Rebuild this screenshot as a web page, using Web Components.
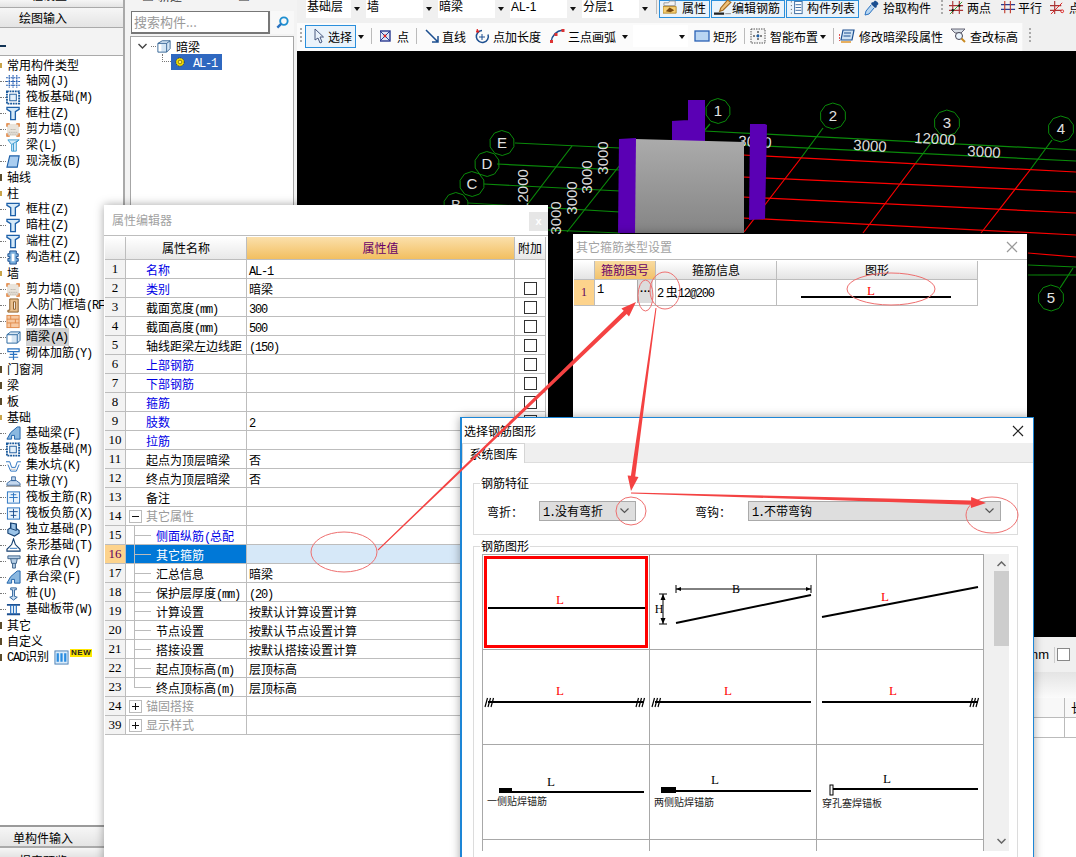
<!DOCTYPE html>
<html lang="zh-CN">
<head>
<meta charset="UTF-8">
<title>钢筋算量</title>
<style>
  html, body { margin: 0; height: 100%; overflow: hidden; background: #f0f0f0; }
  body { font: 12px "Noto Sans CJK SC", sans-serif; color: #000; }
</style>
</head>
<body>
<app-shell>
  <module-nav slot="nav"></module-nav>
  <part-list slot="list"></part-list>
  <draw-area slot="draw"></draw-area>
</app-shell>

<float-window title="属性编辑器" style="left:104px;top:205px;width:444px;height:660px;z-index:2" closebox="flat" dim>
  <prop-table></prop-table>
</float-window>
<float-window title="其它箍筋类型设置" style="left:573px;top:234px;width:454px;height:200px;z-index:3" closebox="x" dim>
  <stirrup-table></stirrup-table>
</float-window>
<float-window title="选择钢筋图形" style="left:460px;top:417px;width:574px;height:450px;z-index:4" closebox="x" blue>
  <shape-picker></shape-picker>
</float-window>
<note-layer></note-layer>

<script>
// wrap ascii runs so they get the half width look of the original font
const lat = s => s.replace(/[\x21-\x7e]+/g, m => `<span class="l">${m}</span>`);
const LAT_CSS = `.l{font-family:"Liberation Mono",monospace;font-size:12px;letter-spacing:-1.2px}`;
const ico = (body, s = 16) => `<svg width="${s}" height="${s}" viewBox="0 0 16 16" fill="none" style="flex:none;display:block">${body}</svg>`;

const ICONS = {
  grid: `<path d="M0 4h15M0 8h15M0 12h15M3.5 1v14M7.5 1v14M11.5 1v14" stroke="#2a62b4" stroke-width="1.2" stroke-dasharray="2 .6"/>`,
  raft: `<rect x="1" y="1.5" width="13" height="13" stroke="#1b5a9c" stroke-width="2" stroke-dasharray="2 .8"/><rect x="4" y="4.5" width="7" height="7" fill="#e4f0fa" stroke="#1b5a9c"/>`,
  column: `<path d="M1 1.5h13v2l-4 2.5v8.5H5V6L1 3.500z" fill="#d5e9f8" stroke="#1c5fa8" stroke-width="1.4"/>`,
  wall: `<rect x="1" y="2" width="13" height="13" fill="#e9e4dc"/><path d="M3 11h9M2 13h11M5 8h6" stroke="#a9a39a" stroke-dasharray="1 1"/><path d="M1 5V2h3M11 2h3v3M1 12v3h3M11 15h3v-3" stroke="#e07a30" stroke-width="1.4"/>`,
  beam: `<path d="M2 2h12l-3 3v9H6V7z" fill="#d5ecfa" stroke="#3a9ad0"/><path d="M6 7l8-5M8 14V6" stroke="#3a9ad0"/>`,
  slab: `<path d="M4 2h10l-2 12H1z" fill="#a9cdf0" stroke="#1c5fa8" stroke-width="1.2"/>`,
  struct: `<path d="M4 1h7v3h2v3h-2v2h2v3h-2v3H4v-3H2V9h2V7H2V4h2z" fill="#7ab0de" stroke="#1c4f90"/><path d="M6 4h3v8H6z" fill="#fff"/>`,
  door: `<path d="M4 1h9v14H2v-2h2zM8 4v8h2V4z" fill="#e9c08f" stroke="#8a5a22"/>`,
  brick: `<rect x="1" y="1.500" width="13" height="13" fill="#f7c9a2" stroke="#e08a4a"/><path d="M1 5.500h13M1 9.500h13M5 1.500v4M10 5.500v4M5 9.500v5" stroke="#e08a4a"/>`,
  hidden: `<path d="M1 5l4-3h10v9l-3 3H1z" fill="#d7e6f3" stroke="#2f6aa0"/><path d="M1 5h11v9M12 5l3-3" stroke="#2f6aa0"/><rect x="2" y="6" width="4" height="7" fill="#fff"/>`,
  hbar: `<path d="M2 3h12v3H2zM8 6v9M4 9h8M3 12h10" stroke="#2a72c0" stroke-width="1.300"/>`,
  fbeam: `<path d="M1 14l4-7 7-6h3v13H9v-4H6v4z" fill="#8bb8e0" stroke="#1c5fa8"/>`,
  pit: `<path d="M0 4h4l2 6h4l2-6h4M2 7l3 7h6l3-7" stroke="#2a72c0"/><path d="M5 12h6" stroke="#888" stroke-dasharray="1 1"/>`,
  pier: `<path d="M6 3h4v4H6zM1 10l4-3h6l4 3v2H1z" fill="#c5d8ee" stroke="#3a6aa0"/><path d="M0 13h16" stroke="#777"/>`,
  rplus: `<rect x="1.500" y="2" width="13" height="12" fill="#eaf4fc" stroke="#2a72c0"/><path d="M8 3v10M3.500 8h9M5 5h6" stroke="#2a72c0"/>`,
  rminus: `<rect x="1.500" y="2" width="13" height="12" fill="#eaf4fc" stroke="#2a72c0"/><path d="M8 3v10M3.500 6h9M5 10h6" stroke="#1c4f90"/>`,
  indep: `<path d="M5 1l6 1v5l3 2v3l-5 3-7-3V8l3-2z" fill="#9cc4e8" stroke="#143f70" stroke-width="1.200"/><path d="M5 1v6l6 2V2" stroke="#143f70"/>`,
  strip: `<path d="M1 14v-2l5-5 2-6 2 6 5 5v2z" fill="#fff" stroke="#143f70" stroke-width="1.200"/><path d="M4 11h8" stroke="#2a72c0"/>`,
  cap: `<path d="M2 2h13v3H2zM5 5l1 5h5l1-5M7 10v5h3v-5" fill="#b7cfe6" stroke="#3a5f88"/>`,
  pile: `<path d="M5 2h6v2H9v7l3 1-4 3-4-3 3-1V4H5z" fill="#c9def2" stroke="#2a5f98"/>`,
  band: `<path d="M1 3h14M1 13h14" stroke="#1c4f90" stroke-width="2"/><path d="M5 3v10M8 3v10M11 3v10" stroke="#2a72c0" stroke-width="1.300"/>`,
  cad: `<rect x="1" y="1" width="14" height="14" fill="#d9ebfa" stroke="#4a7fb5"/><path d="M4 3.500v9M8 3.500v9M12 3.500v9" stroke="#2a8ce0" stroke-width="2.400"/>`,
  sun: `<circle cx="8" cy="8" r="5.500" fill="#f8e300" stroke="#222" stroke-dasharray="1.500 1"/><circle cx="8" cy="8" r="2.500" fill="#fff06a" stroke="#6a5a00"/>`,
  box3d: `<path d="M1 5l5-3h9v9l-4 4H1z" fill="#d3e5f4" stroke="#2f5f90"/><path d="M1 5h10v10M11 5l4-3" stroke="#2f5f90"/><rect x="2" y="6" width="3" height="8" fill="#fff"/>`,
  // toolbar
  prop: `<path d="M1 3h5l1-2h6v5H1z" fill="#f3f3f3" stroke="#999"/><path d="M0 7h14v7H0z" fill="#f6cf73" stroke="#b68a2a"/><path d="M3 12l4-4 5 3-4 2z" fill="#7a4a10"/>`,
  rebar: `<path d="M12 1l3 2-7 7-3 1 1-3z" fill="#f0c27a" stroke="#a36a20"/><path d="M0 13h9" stroke="#222" stroke-width="2"/><path d="M10 13h5" stroke="#999"/>`,
  list: `<path d="M2 2h1M2 6h1M2 10h1M2 14h1M13 3v10" stroke="#444"/><rect x="6" y="1.500" width="8" height="13" fill="#fff" stroke="#3a6aa0"/><path d="M7 5h6M7 8h6M7 11h6" stroke="#3a6aa0"/>`,
  drop: `<path d="M14 1l1 2-2 2 .5 1-2 1-4-4 1-2 1 .5 2-2z" transform="translate(-.5 1)" fill="#1c4f90"/><path d="M7 5L2 11l-1 4 4-1 5-6" fill="#b7d6f2" stroke="#2a72c0"/>`,
  twop: `<path d="M0 6h15M0 11h15M4 1v14M11 1v14" stroke="#a33" stroke-width="1.200"/><path d="M1 15L14 2" stroke="#2a9a2a"/><circle cx="4" cy="11" r="1.300" fill="#111"/><circle cx="11" cy="6" r="1.300" fill="#111"/>`,
  par: `<path d="M0 5h15M0 10h15" stroke="#2a3a90" stroke-width="1.400"/><path d="M4 1v13M10 1v13" stroke="#c0392b" stroke-width="1.200"/>`,
  pt: `<path d="M0 6h12M0 11h12M5 1v14" stroke="#a33" stroke-width="1.200"/><path d="M1 15L13 3" stroke="#d22"/><circle cx="13" cy="12" r="1.500" stroke="#d22"/>`,
  select: `<path d="M3 1v11l3-2 2 5 2-1-2-5h3.500z" fill="#e8f2fb" stroke="#4a5a80"/>`,
  point: `<rect x="0" y="3" width="10" height="10" fill="#dfe6f5" stroke="#2a3a90" stroke-width="1.400"/><path d="M0 3l10 10M10 3L0 13" stroke="#2a3a90"/><circle cx="5" cy="8" r="1.400" fill="#d22"/>`,
  line: `<path d="M2 2l12 12M14 8v6H8" stroke="#1c4f90" stroke-width="1.500"/>`,
  lenpt: `<path d="M8 2.500a6 6 0 1 0 6 4" stroke="#1c4f90" stroke-width="1.500"/><path d="M3 1l2 3h-3" stroke="#d22" fill="#d22"/><path d="M8 6v6M5 9h6" stroke="#1c4f90"/>`,
  arc: `<path d="M2 14C3 8 7 3 14 2" stroke="#1c4f90" stroke-width="1.400"/><rect x="1" y="12" width="3" height="3" fill="#d33"/><rect x="5.500" y="5" width="3" height="3" fill="#d33"/><rect x="12.500" y="1" width="3" height="3" fill="#d33"/>`,
  rect: `<rect x="1" y="3" width="14" height="10" fill="#b9d5f2" stroke="#2a62b4" stroke-width="1.300"/>`,
  smart: `<rect x="1" y="1" width="14" height="14" fill="#f5f5f5" stroke="#555" stroke-dasharray="1.500 1"/><path d="M8 3v10M3 8h10" stroke="#111" stroke-dasharray="2 1.500"/><circle cx="8" cy="8" r="1.400" fill="#1c5fa8"/>`,
  edit: `<path d="M4 2h11l-2 10H2z" fill="#cfe3f4" stroke="#1c4f90" stroke-width="1.200"/><path d="M5 5h7M4.500 8h7" stroke="#1c4f90"/><path d="M0 6v7" stroke="#d22" stroke-width="1.500" stroke-dasharray="2 1"/><path d="M2 13h10v2H2z" fill="#e8b060"/>`,
  zoomh: `<path d="M1 1h14l-4 4H5z" fill="#d7dde4" stroke="#667"/><circle cx="9" cy="8" r="3.500" fill="#eaf4fc" stroke="#445"/><path d="M11.500 10.500L15 14" stroke="#c98a20" stroke-width="2"/>`,
  search: `<circle cx="9.500" cy="6.500" r="4" stroke="#1f8fd0" stroke-width="2"/><path d="M6.500 9.500L2.500 13.500" stroke="#2a72c0" stroke-width="2.500"/>`
};

class Comp extends HTMLElement {
  constructor() { super(); this.attachShadow({ mode: 'open' }); }
  paint(css, html) { this.shadowRoot.innerHTML = `<style>${LAT_CSS}${css}</style>${html}`; }
}

class AppShell extends Comp {
  connectedCallback() {
    this.paint(`:host{display:grid;grid-template-columns:125px 172px 779px;width:1076px;height:857px;overflow:hidden}
      ::slotted(*){min-width:0}`,
      `<slot name="nav"></slot><slot name="list"></slot><slot name="draw"></slot>`);
  }
}

class ModuleNav extends Comp {
  connectedCallback() {
    const sec = (t, open) => `<tree-node group="${open ? 'open' : 'shut'}" label="${t}"></tree-node>`;
    const it = (ic, t, x = '') => `<tree-node icon="${ic}" label="${t}" ${x}></tree-node>`;
    this.paint(`:host{display:flex;flex-direction:column;height:857px;border-right:2px solid #a9a9a9;box-sizing:border-box;background:#f0f0f0;overflow:hidden}
      .tab{flex:none;box-sizing:border-box;padding-left:19px;background:linear-gradient(#f6f6f6,#e4e4e4);border-bottom:1px solid #aaa;overflow:hidden}
      .t0{height:8px}
      .t0 span{display:block;margin-top:-14px;line-height:18px}
      .t1{height:20px;line-height:19px}
      .head{flex:none;height:27px;background:#f3f3f3;display:flex;align-items:center}
      .head i{width:6px;height:2px;background:#135;margin-top:8px}
      .tree{flex:1;background:#fff;border-top:1px solid #aaa;padding-top:1px;overflow:hidden}
      .t2{height:22px;line-height:21px;padding-left:13px;border-top:2px solid #9a9a9a}
      .t3{height:10px;line-height:26px;padding-left:19px;border-top:1px solid #aaa;border-bottom:0}`,
      `<div class="tab t0"><span>工程设置</span></div><div class="tab t1">绘图输入</div>
       <div class="head"><i></i></div>
       <div class="tree">
        ${sec('常用构件类型', 1)}${it('grid', '轴网(J)')}${it('raft', '筏板基础(M)')}${it('column', '框柱(Z)')}${it('wall', '剪力墙(Q)')}${it('beam', '梁(L)')}${it('slab', '现浇板(B)')}
        ${sec('轴线')}${sec('柱', 1)}${it('column', '框柱(Z)')}${it('column', '暗柱(Z)')}${it('column', '端柱(Z)')}${it('struct', '构造柱(Z)')}
        ${sec('墙', 1)}${it('wall', '剪力墙(Q)')}${it('door', '人防门框墙(RF)')}${it('brick', '砌体墙(Q)')}${it('hidden', '暗梁(A)', 'sel')}${it('hbar', '砌体加筋(Y)')}
        ${sec('门窗洞')}${sec('梁')}${sec('板')}${sec('基础', 1)}
        ${it('fbeam', '基础梁(F)')}${it('raft', '筏板基础(M)')}${it('pit', '集水坑(K)')}${it('pier', '柱墩(Y)')}${it('rplus', '筏板主筋(R)')}${it('rminus', '筏板负筋(X)')}${it('indep', '独立基础(P)')}${it('strip', '条形基础(T)')}${it('cap', '桩承台(V)')}${it('fbeam', '承台梁(F)')}${it('pile', '桩(U)')}${it('band', '基础板带(W)')}
        ${sec('其它')}${sec('自定义')}<tree-node group="shut" label="CAD识别" badge></tree-node>
       </div>
       <div class="tab t2">单构件输入</div><div class="tab t3">报表预览</div>`);
  }
}

class TreeNode extends Comp {
  connectedCallback() {
    const label = lat(this.getAttribute('label'));
    const group = this.getAttribute('group');
    const badge = this.hasAttribute('badge')
      ? `<span class="cad">${ico(ICONS.cad, 15)}</span><span class="new">NEW</span>` : '';
    const lead = group
      ? `<i class="${group}"></i>`
      : `<b></b><span class="ic">${ico(ICONS[this.getAttribute('icon')], 15)}</span>`;
    this.paint(`:host{display:flex;align-items:center;height:16px;white-space:nowrap;line-height:16px}
      b{width:6px;border-top:1px dotted #777;flex:none}
      .ic{width:15px;flex:none;margin-right:5px}
      i{width:2px;height:7px;flex:none;margin-right:5px;background:#5a4a2a}
      i.open{background:#c9a44a;height:5px}
      .sel{background:#d3d3d3;padding-right:1px}
      .cad{margin-left:5px;margin-right:1px}
      .new{font:bold 8px/8px "Liberation Sans",sans-serif;background:#ffe600;color:#222;padding:0 1px;margin-top:-8px;letter-spacing:.5px}`,
      `${lead}<span class="${this.hasAttribute('sel') ? 'sel' : ''}">${label}</span>${badge}`);
  }
}

class PartList extends Comp {
  connectedCallback() {
    this.paint(`:host{display:flex;flex-direction:column;height:857px;background:#f3f3f3;padding:0 3px 0 5px;box-sizing:border-box;overflow:hidden}
      .top{flex:none;height:11px;overflow:hidden;display:flex;gap:4px;line-height:16px;padding-left:12px;align-items:flex-start;color:#333}
      .top span{margin-top:-12px}
      .find{flex:none;display:flex;height:23px;padding-left:1px;gap:1px}
      .find div{width:136px;border:1px solid #777;border-width:1px 2px 2px 1px;background:#fff;color:#999;font-size:13px;line-height:20px;padding-left:2px;box-sizing:content-box;height:20px}
      .find span{width:23px;display:flex;align-items:center;justify-content:center;background:#f8f8f8}
      .box{flex:1;margin-top:2px;background:#fff;border:1px solid #a6a6a6;padding:1px 0 0 0;position:relative}
      .r{display:flex;align-items:center;height:16px}
      .exp{width:9px;height:8px;margin:0 4px 0 7px;flex:none}
      .dots{width:5px;border-top:1px dotted #777;margin-right:1px;flex:none}
      .v{border-left:1px dotted #777;height:8px;width:9px;margin:-8px 0 0 31px;box-sizing:border-box;border-bottom:1px dotted #777;flex:none}
      .hit{display:flex;align-items:center;background:#2f68c0;color:#fff;width:51px;height:16px;padding-left:3px;gap:7px;box-sizing:border-box}
      .t{margin-left:5px}`,
      `<div class="top"><span>▣</span><span>新建</span><span style="margin-left:16px">×</span><span style="margin-left:20px">▣</span></div>
       <div class="find"><div>搜索构件...</div><span>${ico(ICONS.search, 15)}</span></div>
       <div class="box">
         <div class="r"><svg class="exp" viewBox="0 0 9 8" fill="none"><path d="M.5 2l4 4 4-4" stroke="#444" stroke-width="1.400"/></svg><span class="dots"></span>${ico(ICONS.box3d, 14)}<span class="t">暗梁</span></div>
         <div class="r"><span class="v"></span><span class="hit">${ico(ICONS.sun, 12)}<span>${lat('AL-1')}</span></span></div>
       </div>`);
  }
}

class TbBtn extends Comp {
  connectedCallback() {
    const ic = this.getAttribute('icon');
    const label = this.getAttribute('label') || '';
    this.paint(`:host{display:flex;align-items:center;box-sizing:border-box;height:100%;white-space:nowrap;flex:none}
      :host([pressed]){border:1px solid #2a8fdc;background:#eaf3fb}
      svg{margin-right:var(--g,4px)}`,
      `${ic ? ico(ICONS[ic], +(this.getAttribute('size') || 16)) : ''}<span>${label}</span>`);
  }
}

class TbSelect extends Comp {
  connectedCallback() {
    this.paint(`:host{display:flex;flex:none;height:18px;background:#fff;white-space:nowrap;box-sizing:border-box;padding-left:1px;font-family:"Liberation Sans","Noto Sans CJK SC",sans-serif}
      span{flex:1;line-height:14px}
      u{width:12px;background:#f0f0f0;position:relative;display:block;flex:none}
      u::after{content:"";position:absolute;left:3px;top:7px;border:3px solid transparent;border-top:4px solid #111}`,
      `<span>${this.getAttribute('label') || ''}</span><u></u>`);
  }
}

class DrawArea extends Comp {
  connectedCallback() {
    const caret = x => `<i class="caret" style="margin-left:${x}px"></i>`;
    const sep = x => `<i class="sep" style="margin-left:${x}px"></i>`;
    const grip = x => `<i class="grip" style="margin-left:${x}px"></i>`;
    this.paint(`:host{display:flex;flex-direction:column;height:857px;background:#f0f0f0;overflow:hidden}
      .tb1{flex:none;height:23px;display:flex;align-items:flex-start;padding-left:9px}
      .tb1 tb-btn{height:18px;padding-bottom:3px}
      .tb2{flex:none;height:28px;display:flex;align-items:center;background:linear-gradient(90deg,#fbfbfb 93%,#f0f0f0 93.2%);padding-bottom:2px;box-sizing:border-box}
      .tb2 tb-btn{height:23px}
      .caret{width:0;height:0;border:3px solid transparent;border-top:4px solid #111;margin-top:4px;flex:none}
      .sep{width:1px;height:16px;background:#bbb;flex:none}
      .grip{width:2px;height:16px;flex:none;background:repeating-linear-gradient(#aaa 0 2px,transparent 2px 4px)}
      .fld{flex:none;width:55px;height:22px;background:#fff;display:flex;align-items:center;justify-content:flex-end;padding-right:3px;box-sizing:border-box}
      .fld .caret{margin-top:4px}
      cad-view{flex:none;height:586px}
      bottom-panel{flex:1}`,
      `<div class="tb1">
         <tb-select label="基础层" style="width:57px"></tb-select>
         <tb-select label="墙" style="width:69px;margin-left:3px"></tb-select>
         <tb-select label="暗梁" style="width:69px;margin-left:3px"></tb-select>
         <tb-select label="AL-1" style="width:69px;margin-left:3px"></tb-select>
         <tb-select label="分层1" style="width:69px;margin-left:3px"></tb-select>
         <i class="sep" style="margin-left:5px;height:14px"></i>
         <tb-btn pressed icon="prop" label="属性" style="margin-left:2px;width:51px;padding-left:3px;--g:4px" size="15"></tb-btn>
         <tb-btn pressed icon="rebar" label="编辑钢筋" style="margin-left:1px;width:74px;padding-left:2px;--g:0px" size="18"></tb-btn>
         <tb-btn pressed icon="list" label="构件列表" style="margin-left:1px;width:73px;padding-left:2px;--g:3px" size="15"></tb-btn>
         <tb-btn icon="drop" label="拾取构件" style="margin-left:5px;width:71px;--g:3px"></tb-btn>
         <i class="grip" style="margin-left:6px;height:14px"></i>
         <tb-btn icon="twop" label="两点" style="margin-left:6px;width:45px;--g:3px" size="15"></tb-btn>
         <tb-btn icon="par" label="平行" style="margin-left:7px;width:45px;--g:2px" size="15"></tb-btn>
         <tb-btn icon="pt" label="点角" style="margin-left:4px;width:45px;--g:4px" size="15"></tb-btn>
       </div>
       <div class="tb2">
         ${grip(3)}
         <tb-btn pressed icon="select" label="选择" style="margin-left:3px;width:51px;padding-left:6px;--g:0px"></tb-btn>
         ${caret(2)}${sep(7)}
         <tb-btn icon="point" label="点" style="margin-left:8px;width:36px;--g:1px"></tb-btn>
         ${sep(0)}
         <tb-btn icon="line" label="直线" style="margin-left:7px;width:48px;--g:2px"></tb-btn>
         <tb-btn icon="lenpt" label="点加长度" style="margin-left:2px;width:73px;--g:3px"></tb-btn>
         <tb-btn icon="arc" label="三点画弧" style="margin-left:2px;width:73px;--g:3px"></tb-btn>
         ${caret(0)}
         <div class="fld" style="margin-left:5px"><i class="caret"></i></div>
         <tb-btn icon="rect" label="矩形" style="margin-left:6px;width:50px;--g:3px"></tb-btn>
         ${sep(0)}
         <tb-btn icon="smart" label="智能布置" style="margin-left:5px;width:70px;--g:4px"></tb-btn>
         ${caret(0)}${sep(7)}
         <tb-btn icon="edit" label="修改暗梁段属性" style="margin-left:5px;width:111px;--g:4px"></tb-btn>
         <tb-btn icon="zoomh" label="查改标高" style="width:70px;--g:4px"></tb-btn>
         ${grip(9)}
       </div>
       <cad-view></cad-view>
       <bottom-panel></bottom-panel>`);
  }
}

class CadView extends Comp {
  connectedCallback() {
    const G = '#0a8a0a', R = '#f00';
    const ln = (c, ...seg) => seg.map(s => `<line x1="${s[0]}" y1="${s[1]}" x2="${s[2]}" y2="${s[3]}" stroke="${c}" stroke-width="1.200"/>`).join('');
    const axis = (t, x, y, r = 12.500) => {
      let p = [];
      for (let i = 0; i < 10; i++) { const a = i * Math.PI / 5 + .3; p.push(`${(x + r * Math.cos(a)).toFixed(1)},${(y + r * Math.sin(a)).toFixed(1)}`); }
      return `<polygon points="${p.join(' ')}" fill="none" stroke="${G}"/><text x="${x}" y="${y + 5}" class="a">${t}</text>`;
    };
    const dim = (t, x, y, rot) => `<text class="d" transform="translate(${x},${y}) rotate(${rot})" y="5">${t}</text>`;
    this.paint(`:host{display:block;background:#000;overflow:hidden}
      svg{display:block}
      text{font-family:"Liberation Sans",sans-serif;text-anchor:middle;fill:#e0e0e0}
      .a{font-size:15px}.d{font-size:15px;fill:#ddd}`,
      `<svg width="779" height="586" viewBox="297 51 779 586">
       <defs><linearGradient id="gb" x1="0" y1="0" x2="0" y2="1"><stop offset="0" stop-color="#ababab"/><stop offset="1" stop-color="#858585"/></linearGradient></defs>
       ${ln(G, [515, 143, 620, 148], [497, 164, 620, 170], [484, 184, 620, 191], [468, 203, 620, 212], [548, 230, 620, 233],
            [572, 146, 527, 205], [620, 165, 567, 232], [704, 131, 1076, 150], [704, 143, 1076, 161], [1028, 265, 1076, 267], [1028, 275, 1076, 275],
            [823, 128, 801, 158], [938, 134, 915, 164], [1052, 140, 1030, 170], [1060, 288, 1073, 268], [704, 131, 710, 124])}
       ${ln(R, [743, 155, 1076, 172], [743, 177, 1076, 192], [743, 197, 1076, 213], [743, 218, 1076, 235], [1028, 253, 1076, 257],
            [801, 158, 744, 232], [915, 164, 863, 233], [1030, 170, 981, 233])}
       ${axis('E', 502, 143)}${axis('D', 487, 164)}${axis('C', 472, 184)}${axis('B', 456, 205)}
       ${axis('1', 718, 111)}${axis('2', 833, 116, 13)}${axis('3', 947, 123, 13)}${axis('4', 1061, 129, 13)}${axis('5', 1051, 298, 13)}
       ${dim('3000', 603, 158, -90)}${dim('3000', 587, 177, -90)}${dim('12000', 523, 190, -90)}${dim('3000', 572, 198, -90)}${dim('3000', 556, 218, -90)}
       ${dim('3000', 755, 142, 3)}${dim('3000', 870, 146, 3)}${dim('12000', 935, 139, 3)}${dim('3000', 984, 152, 3)}
       <path d="M672 121l16-1v22h-16zM688 100h17v42h-17z" fill="#5a00b4"/>
       <path d="M635 139l109 3v91H635z" fill="url(#gb)"/>
       <path d="M619 139l17-1-1 95h-17z" fill="#5a00b4"/>
       <path d="M750 124h15l2 1-2 94-16 1z" fill="#5a00b4"/>
      </svg>`);
  }
}

class BottomPanel extends Comp {
  connectedCallback() {
    this.paint(`:host{display:flex;flex-direction:column;background:#f0f0f0;overflow:hidden}
      .r1{height:35px;flex:none;display:flex;justify-content:flex-end;align-items:center;padding-right:6px;font-family:"Liberation Sans",sans-serif;font-size:13px}
      .r1 i{width:1px;height:16px;background:#ccc;margin:0 2px 0 5px}
      .r1 b{width:11px;height:11px;background:#fff;border:1px solid #888}
      .r2{height:26px;flex:none;background:linear-gradient(#e4e4e4,#fbfbfb)}
      .tbl{flex:1;background:#fff}
      .th,.td{display:grid;grid-template-columns:1fr 12px;height:19px;border-bottom:1px solid #bbb;box-sizing:content-box;background:#f8f8f8}
      .td{background:#fff}
      .th span,.td span{border-left:1px solid #bbb;white-space:nowrap;overflow:hidden;padding-left:6px;line-height:19px}`,
      `<div class="r1">mm<i></i><b></b></div><div class="r2"></div>
       <div class="tbl"><div class="th"><div></div><span>长度</span></div><div class="td"><div></div><span></span></div></div>`);
  }
}

class FloatWindow extends Comp {
  connectedCallback() {
    const mode = this.getAttribute('closebox');
    const close = mode === 'flat'
      ? `<span class="fc">x</span>`
      : `<svg class="xc" width="12" height="12" viewBox="0 0 12 12"><path d="M1 1l10 10M11 1L1 11" stroke="${this.hasAttribute('dim') ? '#999' : '#222'}" stroke-width="1.200"/></svg>`;
    this.paint(`:host{position:absolute;display:flex;flex-direction:column;background:#fff;box-sizing:border-box;box-shadow:0 0 9px rgba(0,0,0,.35)}
      :host([blue]){border:1px solid #1d86d6;border-left-width:2px}
      .bar{flex:none;height:25px;display:flex;align-items:center;justify-content:space-between;padding:0 9px 0 3px;white-space:nowrap}
      :host([dim]) .bar{color:#a2a2a2}
      :host([blue]) .bar{padding:0 9px 0 2px}
      :host([closebox=flat]) .bar{height:30px;padding:0 0 0 8px;align-items:flex-start;line-height:30px}
      .fc{width:19px;height:19px;background:#e6e6e6;color:#fff;font:bold 11px/19px "Liberation Sans",sans-serif;text-align:center;margin-top:7px}
      ::slotted(*){flex:1;min-height:0}`,
      `<div class="bar"><span>${this.getAttribute('title')}</span>${close}</div><slot></slot>`);
    this.removeAttribute('title');
  }
}

class PropRow extends Comp {
  connectedCallback() {
    const a = n => this.getAttribute(n) || '';
    const box = a('fold') ? `<svg width="13" height="13" viewBox="0 0 13 13"><rect x=".5" y=".5" width="12" height="12" fill="#fff" stroke="#bbb"/><path d="M3 6.500h7${a('fold') === '+' ? 'M6.500 3v7' : ''}" stroke="#111"/></svg>` : '';
    this.paint(`:host{display:grid;grid-template-columns:21px 121px 268px 31px;height:19px;line-height:20px;white-space:nowrap;box-sizing:border-box}
      div{border:solid #bdbdbd;border-width:0 1px 1px 0;box-sizing:border-box;overflow:hidden;height:19px}
      .n{background:#f3f3f3;text-align:center;font-family:"Liberation Serif",serif;font-size:13px;line-height:18px}
      .k{padding-left:20px}
      .v{padding-left:2px}
      .c{display:flex;align-items:center;justify-content:center}
      .c i{display:block;width:11px;height:11px;border:1px solid #333;background:#fff}
      :host([blue]) .k{color:#0000e6}
      :host([sub]) .k{padding-left:30px;background:linear-gradient(#bbb,#bbb) 8px 0/1px 100% no-repeat,linear-gradient(#bbb,#bbb) 9px 9px/16px 1px no-repeat}
      :host([last]) .k{padding-left:30px;background:linear-gradient(#bbb,#bbb) 8px 0/1px 10px no-repeat,linear-gradient(#bbb,#bbb) 9px 9px/16px 1px no-repeat}
      :host([fold]) .k{color:#999;padding-left:3px;display:flex;gap:4px;align-items:center}
      :host([cur]) .n{background:#fdd38c;color:#600060}
      :host([cur]) .k{background-color:#0078d7;color:#fff}
      :host([cur]) .v,:host([cur]) .c{background:#d6e8f8}`,
      `<div class="n">${a('n')}</div><div class="k">${box}<span>${lat(a('k'))}</span></div><div class="v">${lat(a('v'))}</div><div class="c">${this.hasAttribute('check') ? '<i></i>' : ''}</div>`);
  }
}

class PropTable extends Comp {
  connectedCallback() {
    const rows = [
      ['名称', 'AL-1', 'blue'], ['类别', '暗梁', 'blue check'], ['截面宽度(mm)', '300', 'check'], ['截面高度(mm)', '500', 'check'],
      ['轴线距梁左边线距', '(150)', 'check'], ['上部钢筋', '', 'blue check'], ['下部钢筋', '', 'blue check'], ['箍筋', '', 'blue check'],
      ['肢数', '2', 'blue check'], ['拉筋', '', 'blue check'], ['起点为顶层暗梁', '否', 'check'], ['终点为顶层暗梁', '否', 'check'], ['备注', '', 'check']
    ].map((r, i) => `<prop-row n="${i + 1}" k="${r[0]}" v="${r[1]}" ${r[2]}></prop-row>`).join('');
    const sub = [
      ['侧面纵筋(总配', '', 'blue'], ['其它箍筋', '', 'cur'], ['汇总信息', '暗梁'], ['保护层厚度(mm)', '(20)'], ['计算设置', '按默认计算设置计算'],
      ['节点设置', '按默认节点设置计算'], ['搭接设置', '按默认搭接设置计算'], ['起点顶标高(m)', '层顶标高'], ['终点顶标高(m)', '层顶标高', 'last']
    ].map((r, i) => `<prop-row n="${i + 15}" k="${r[0]}" v="${r[1]}" ${r[2] === 'last' ? 'last' : 'sub'} ${r[2] === 'last' ? '' : (r[2] || '')}></prop-row>`).join('');
    this.paint(`:host{display:block;padding:1px 0 0 1px;border-top:1px solid #bdbdbd;box-sizing:border-box}
      .h{display:grid;grid-template-columns:21px 121px 268px 31px;height:23px;line-height:21px;text-align:center;font-size:12px}
      .h div{border:solid #bdbdbd;border-width:0 1px 1px 0;background:linear-gradient(#fff,#e8e8e8);box-sizing:border-box}
      .h .o{background:linear-gradient(#fbe0ab,#f2bf60);color:#680068}`,
      `<div class="h"><div></div><div>属性名称</div><div class="o">属性值</div><div>附加</div></div>
       ${rows}<prop-row n="14" k="其它属性" fold="-"></prop-row>${sub}
       <prop-row n="24" k="锚固搭接" fold="+"></prop-row><prop-row n="39" k="显示样式" fold="+"></prop-row>`);
  }
}

class StirrupTable extends Comp {
  connectedCallback() {
    this.paint(`:host{display:block;padding:1px 0 0 1px;border-top:1px solid #bdbdbd;box-sizing:border-box}
      .g{display:grid;grid-template-columns:21px 61px 121px 201px;width:404px}
      .g>div{border:solid #bdbdbd;border-width:0 1px 1px 0;box-sizing:border-box}
      .h>div{height:19px;line-height:18px;text-align:center;background:linear-gradient(#fff,#e4e4e4)}
      .h .o{background:linear-gradient(#f9dba0,#f2c36c);color:#680068;white-space:nowrap}
      .h .b{background:linear-gradient(#fff,#e4e4e4)}
      .r>div{height:26px;line-height:24px}
      .idx{background:#fdd38c;color:#600060;text-align:center;font-family:"Liberation Serif",serif}
      .one{display:flex;justify-content:space-between;padding:0 2px 2px 2px;line-height:16px!important}
      .one u{width:15px;background:#dcdcdc;border-left:1px solid #aaa;text-decoration:none;font:bold 11px/22px "Liberation Sans",sans-serif;text-align:center}
      .info{padding-left:1px;white-space:nowrap}
      svg{display:block}`,
      `<div class="g h"><div></div><div class="o">箍筋图号</div><div class="b">箍筋信息</div><div class="b">图形</div></div>
       <div class="g r"><div class="idx">1</div><div class="one"><span>${lat('1')}</span><u>···</u></div>
        <div class="info">${lat('2')} 虫${lat('12@200')}</div>
        <div><svg width="200" height="25"><text x="94" y="15" fill="#f00" text-anchor="middle" font-family="Liberation Serif" font-size="13">L</text><path d="M24 17h150" stroke="#000" stroke-width="2"/></svg></div></div>`);
  }
}

class GroupBox extends Comp {
  connectedCallback() {
    this.paint(`:host{display:block;position:relative;border:1px solid #dcdcdc;box-sizing:border-box}
      b{position:absolute;left:6px;top:-9px;font-weight:400;background:#fff;padding:0 1px;line-height:16px}`,
      `<b>${this.getAttribute('label')}</b><slot></slot>`);
  }
}

class ComboBox extends Comp {
  connectedCallback() {
    this.paint(`:host{display:flex;align-items:center;justify-content:space-between;height:20px;box-sizing:border-box;background:#dedede;border:1px solid #aaa;padding:0 6px 0 3px}
      svg{display:block}`,
      `<span>${lat(this.getAttribute('label'))}</span><svg width="9" height="6" viewBox="0 0 9 6" fill="none"><path d="M.5 .5l4 4 4-4" stroke="#555" stroke-width="1.200"/></svg>`);
  }
}

class ShapeCell extends Comp {
  connectedCallback() {
    const k = this.getAttribute('kind') || '';
    const hash = x => `<path d="M${x - 4} 57l2.500-9M${x - 1} 57l2.500-9M${x + 2} 57l2.500-9" stroke="#000" stroke-width="1.200"/>`;
    const L = (x, y, c = '#f00') => `<text x="${x}" y="${y}" fill="${c}" text-anchor="middle" font-family="Liberation Serif" font-size="13">L</text>`;
    const ln = (x1, y1, x2, y2) => `<line x1="${x1}" y1="${y1}" x2="${x2}" y2="${y2}" stroke="#000" stroke-width="2"/>`;
    const cap = (x, y, t) => `<text x="${x}" y="${y}" font-size="10" font-family="Noto Sans CJK SC" fill="#222">${t}</text>`;
    const draw = {
      flat: ln(5, 53, 162, 53) + L(77, 49),
      bent: ln(26, 68, 161, 40) + `<path d="M26 34h135M26 30v8M161 30v8M13 39v30M9 39h8M9 69h8" stroke="#000"/><path d="M13 39l-2.500 6h5zM13 69l-2.500-6h5zM26 34l5-2v4zM161 34l-5-2v4z" fill="#000"/>`
        + `<text x="86" y="38" text-anchor="middle" font-family="Liberation Serif" font-size="12" fill="#000">B</text><text x="9" y="58" text-anchor="middle" font-family="Liberation Serif" font-size="12" fill="#000">H</text>`,
      slope: ln(5, 62, 161, 32) + L(68, 46),
      both: ln(5, 52, 161, 52) + hash(6) + hash(157) + L(77, 45),
      left: ln(5, 52, 161, 52) + hash(6) + L(78, 45),
      right: ln(5, 52, 161, 52) + hash(157) + L(76, 45),
      one: ln(16, 47, 161, 47) + `<rect x="16" y="43" width="13" height="5" fill="#000"/>` + L(68, 41, '#000') + cap(4, 60, '一侧贴焊锚筋'),
      two: ln(11, 46, 161, 46) + `<rect x="11" y="42" width="15" height="6" fill="#000"/>` + L(65, 39, '#000') + cap(4, 61, '两侧贴焊锚筋'),
      plug: ln(13, 44, 161, 44) + `<rect x="13" y="40" width="3" height="10" fill="#fff" stroke="#000"/>` + L(70, 38, '#000') + cap(5, 62, '穿孔塞焊锚板')
    }[k] || '';
    this.paint(`:host{display:block;box-sizing:border-box;height:95px;border:solid #a8a8a8;border-width:0 1px 1px 0;position:relative}
      :host([picked])::after{content:"";position:absolute;inset:1px;border:3px solid #f00}
      svg{display:block}`,
      `<svg width="166" height="94">${draw}</svg>`);
  }
}

class ShapePicker extends Comp {
  connectedCallback() {
    const kinds = ['flat', 'bent', 'slope', 'both', 'left', 'right', 'one', 'two', 'plug', '', '', ''];
    this.paint(`:host{display:flex;flex-direction:column;overflow:hidden}
      .tabs{flex:none;height:20px;background:#efefef;border-bottom:1px solid #ddd;box-sizing:border-box;display:flex}
      .tabs b{font-weight:400;width:63px;height:20px;background:#fff;border:1px solid #d5d5d5;border-bottom:0;box-sizing:border-box;text-align:center;line-height:20px}
      .body{flex:1;background:#fff;padding:20px 15px 0 11px;min-height:0}
      .c1{height:52px;display:block}
      .row{display:flex;align-items:center;padding:17px 0 0 13px;white-space:nowrap}
      .c2{margin-top:11px;height:340px;padding:7px 0 0 8px}
      .wrap{display:flex;height:297px;overflow:hidden}
      .grid{display:grid;grid-template-columns:repeat(3,167px);grid-auto-rows:95px;border:solid #a8a8a8;border-width:1px 0 0 1px;width:502px;flex:none;box-sizing:border-box;align-content:start}
      .pad{width:10px;background:#f0f0f0;flex:none}
      .bar{width:15px;background:#f0f0f0;position:relative;flex:none}
      .bar s{position:absolute;left:0;right:0;top:17px;height:75px;background:#cdcdcd}
      .bar svg{position:absolute;left:3px}`,
      `<div class="tabs"><b>系统图库</b></div>
       <div class="body">
        <group-box class="c1" label="钢筋特征"><div class="row">
          <span style="width:52px">弯折：</span><combo-box label="1.没有弯折" style="width:97px"></combo-box>
          <span style="margin-left:59px;width:53px">弯钩：</span><combo-box label="1.不带弯钩" style="width:253px"></combo-box>
        </div></group-box>
        <group-box class="c2" label="钢筋图形"><div class="wrap">
          <div class="grid">${kinds.map((k, i) => `<shape-cell kind="${k}" ${i === 0 ? 'picked' : ''}></shape-cell>`).join('')}</div>
          <div class="pad"></div>
          <div class="bar"><svg width="9" height="6" style="top:7px" fill="none"><path d="M.5 5l4-4 4 4" stroke="#666" stroke-width="1.500"/></svg><s></s>
           <svg width="9" height="6" style="bottom:7px" fill="none"><path d="M.5 1l4 4 4-4" stroke="#666" stroke-width="1.500"/></svg></div>
        </div></group-box>
       </div>`);
  }
}

class NoteLayer extends Comp {
  connectedCallback() {
    const arrow = (x1, y1, x2, y2) => {
      const l = Math.hypot(x2 - x1, y2 - y1), ux = (x2 - x1) / l, uy = (y2 - y1) / l, nx = -uy, ny = ux;
      const bx = x2 - ux * 15, by = y2 - uy * 15;
      const p = (x, y, s) => `${(x + nx * s).toFixed(1)},${(y + ny * s).toFixed(1)}`;
      return `<polygon fill="#f44242" points="${p(x1, y1, .5)} ${p(bx, by, 2.200)} ${p(bx, by, 5.500)} ${x2},${y2} ${p(bx, by, -5.500)} ${p(bx, by, -2.200)} ${p(x1, y1, -.5)}"/>`;
    };
    const oval = (cx, cy, rx, ry) => `<ellipse cx="${cx}" cy="${cy}" rx="${rx}" ry="${ry}" fill="none" stroke="#ee6f6f"/>`;
    this.paint(`:host{position:absolute;left:0;top:0;z-index:9;pointer-events:none}svg{display:block}`,
      `<svg width="1076" height="857">
       ${oval(344, 552, 33, 20)}${oval(645.500, 295.500, 7.500, 15.500)}${oval(665, 290.500, 15, 18.500)}${oval(891, 289, 44, 16)}${oval(631, 511, 15, 14)}${oval(992, 515, 26, 18)}
       ${arrow(378, 550, 636, 302)}${arrow(656, 308, 631, 491)}${arrow(631, 493, 986, 503)}
      </svg>`);
  }
}

customElements.define('app-shell', AppShell);
customElements.define('module-nav', ModuleNav);
customElements.define('tree-node', TreeNode);
customElements.define('part-list', PartList);
customElements.define('tb-btn', TbBtn);
customElements.define('tb-select', TbSelect);
customElements.define('draw-area', DrawArea);
customElements.define('cad-view', CadView);
customElements.define('bottom-panel', BottomPanel);
customElements.define('float-window', FloatWindow);
customElements.define('prop-row', PropRow);
customElements.define('prop-table', PropTable);
customElements.define('stirrup-table', StirrupTable);
customElements.define('group-box', GroupBox);
customElements.define('combo-box', ComboBox);
customElements.define('shape-cell', ShapeCell);
customElements.define('shape-picker', ShapePicker);
customElements.define('note-layer', NoteLayer);
</script>
</body>
</html>
